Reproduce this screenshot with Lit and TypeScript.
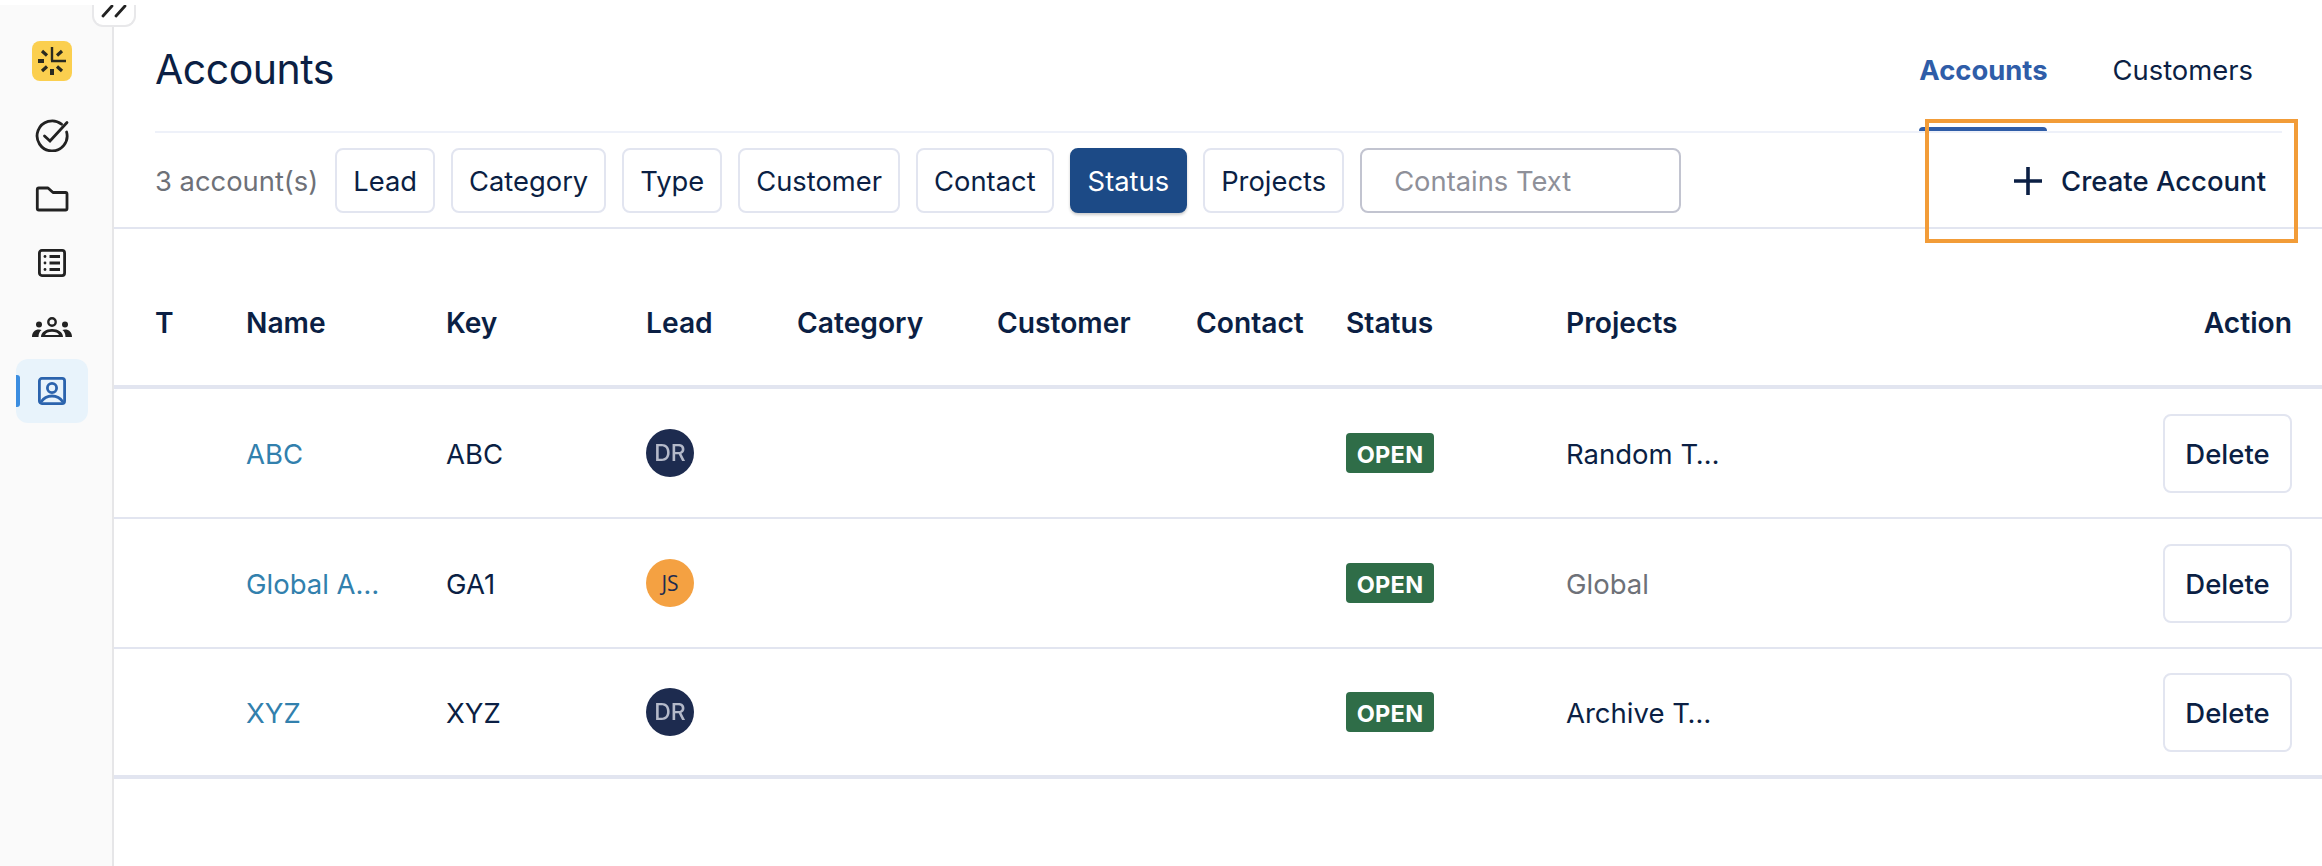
import { LitElement, html, css } from "lit";
import { customElement } from "lit/decorators.js";

const FILTERS = ["Lead", "Category", "Type", "Customer", "Contact", "Status", "Projects"];
const COLS = ["T", "Name", "Key", "Lead", "Category", "Customer", "Contact", "Status", "Projects"];
const ROWS = [
  { name: "ABC", key: "ABC", av: "DR", project: "Random T…", muted: false },
  { name: "Global A…", key: "GA1", av: "JS", project: "Global", muted: true },
  { name: "XYZ", key: "XYZ", av: "DR", project: "Archive T…", muted: false },
];

@customElement("app-root")
export class AppRoot extends LitElement {
  static styles = css`
    :host {
      display: flex;
      position: relative;
      min-height: 866px;
      background: #fff;
      font-family: Inter, "Liberation Sans", sans-serif;
      color: #0b1f44;
      overflow: hidden;
    }
    .side {
      flex: 0 0 114px;
      box-sizing: border-box;
      margin-top: 5px;
      background: #fafafa;
      border-right: 2px solid #e6e6e8;
      display: flex;
      flex-direction: column;
      align-items: center;
      padding: 36px 8px 0 0;
      position: relative;
    }
    .toggle {
      position: absolute;
      left: 92px;
      top: 0;
      width: 44px;
      height: 22px;
      box-sizing: border-box;
      background: #fff;
      border: 2px solid #e8e8ea;
      border-top: 0;
      border-radius: 0 0 11px 11px;
      display: flex;
      justify-content: center;
    }
    .logo { display: block; width: 40px; height: 40px; margin-bottom: 22px; }
    .nav {
      width: 72px;
      height: 64px;
      display: flex;
      align-items: center;
      justify-content: center;
      position: relative;
      border-radius: 12px;
    }
    .nav.active { background: #e8f3fb; }
    .nav.active::before {
      content: "";
      position: absolute;
      left: 0;
      top: 16px;
      width: 4px;
      height: 32px;
      background: #3b8de0;
      border-radius: 0 3px 3px 0;
    }
    .main { flex: 1; min-width: 0; }
    .head {
      height: 133px;
      box-sizing: border-box;
      margin: 0 40px 0 41px;
      padding-right: 29px;
      border-bottom: 2px solid #eef1f9;
      display: flex;
      align-items: stretch;
      justify-content: space-between;
    }
    h1 {
      margin: 0;
      align-self: center;
      font-size: 41px;
      font-weight: 400;
      letter-spacing: -0.5px;
      line-height: 48px;
      padding-top: 6px;
    }
    .tabs { display: flex; gap: 65px; }
    .tab {
      display: flex;
      align-items: center;
      padding-top: 9px;
      font-size: 27.4px;
      position: relative;
    }
    .tab.on { color: #2f5da8; font-weight: 700; }
    .tab.on::after {
      content: "";
      position: absolute;
      left: 0;
      right: 0;
      bottom: 0;
      height: 4px;
      background: #2f5da8;
      border-radius: 4px 4px 0 0;
    }
    .bar {
      height: 96px;
      box-sizing: border-box;
      padding: 15px 56px 0 41px;
      border-bottom: 2px solid #e2e5f0;
      display: flex;
      align-items: flex-start;
      font-size: 27.35px;
    }
    .count { color: #6e7178; height: 65px; line-height: 67px; margin-right: 17px; }
    .chips { display: flex; gap: 16px; }
    .chip {
      height: 65px;
      box-sizing: border-box;
      padding: 1px 16px 0;
      border: 2px solid #e2e5f0;
      border-radius: 8px;
      background: #fff;
      display: flex;
      align-items: center;
    }
    .chip.on {
      background: #1c4a86;
      border-color: #1c4a86;
      color: #fff;
      box-shadow: 0 2px 3px rgba(0, 0, 0, 0.2);
    }
    .search {
      width: 321px;
      height: 65px;
      box-sizing: border-box;
      padding: 1px 0 0 32px;
      border: 2px solid #c2c4d0;
      border-radius: 8px;
      font: inherit;
      color: inherit;
      outline: none;
    }
    .search::placeholder { color: #8e9099; opacity: 1; }
    .create {
      margin-left: auto;
      height: 65px;
      display: flex;
      align-items: center;
      gap: 19px;
      font-weight: 500;
      font-size: 27.5px;
    }
    .create svg { display: block; }
    .grid {
      display: grid;
      grid-template-columns: 91px 200px 200px 151px 200px 199px 150px 220px 1fr 129px;
      align-items: center;
      padding: 0 30px 0 41px;
      font-size: 27.5px;
    }
    .thead {
      margin-top: 35px;
      height: 125px;
      box-sizing: border-box;
      border-bottom: 4px solid #e2e5f0;
      font-weight: 600;
      font-size: 28.2px;
      padding-bottom: 4px;
    }
    .thead .act { grid-column: 10; text-align: right; white-space: nowrap; justify-self: end; }
    .row {
      height: 130px;
      box-sizing: border-box;
      border-bottom: 2px solid #e2e5f0;
    }
    .row.last { border-bottom-width: 4px; }
    .txt { padding-top: 2px; }
    .link { color: #3280ad; }
    .muted { color: #6e7178; }
    .av {
      width: 48px;
      height: 48px;
      border-radius: 50%;
      display: flex;
      align-items: center;
      justify-content: center;
      font-size: 23px;
    }
    .av.DR { background: #1d2b4f; color: #b4b9c9; font-weight: 500; }
    .av.DR span { filter: blur(0.5px); }
    .av.JS {
      background: #f4a142;
      color: #1d2b4f;
      font-family: "Open Sans", sans-serif;
      font-size: 21px;
    }
    .badge {
      width: 88px;
      height: 40px;
      box-sizing: border-box;
      padding-top: 2px;
      border-radius: 4px;
      background: #2f6d48;
      color: #fff;
      font-size: 23.5px;
      font-weight: 700;
      display: flex;
      align-items: center;
      justify-content: center;
      letter-spacing: 0.3px;
    }
    .del {
      grid-column: 10;
      justify-self: end;
      width: 129px;
      height: 79px;
      box-sizing: border-box;
      padding-top: 2px;
      border: 2px solid #e2e5f0;
      border-radius: 8px;
      display: flex;
      align-items: center;
      justify-content: center;
      font-weight: 500;
    }
    .focus {
      position: absolute;
      left: 1925px;
      top: 119px;
      width: 373px;
      height: 124px;
      box-sizing: border-box;
      border: 4px solid #f29c38;
      pointer-events: none;
    }
  `;

  private navIcons = [
    html`<svg width="34" height="34" viewBox="0 0 34 34" fill="none" stroke="#222" stroke-width="2.8" stroke-linecap="round">
      <path d="M26.5 6.2 A15 15 0 1 0 31.6 14" />
      <path d="M9.5 18 L15 23 L32 4.5" />
    </svg>`,
    html`<svg width="34" height="26" viewBox="0 0 34 26" fill="none" stroke="#222" stroke-width="2.8" stroke-linejoin="round">
      <path d="M2.3 3.5 Q2.3 2 3.8 2 H13 L18 6.5 H30.5 Q32 6.5 32 8 V22.5 Q32 24 30.5 24 H3.8 Q2.3 24 2.3 22.5 Z" />
    </svg>`,
    html`<svg width="28" height="28" viewBox="0 0 28 28" fill="none" stroke="#222" stroke-width="2.8">
      <rect x="1.4" y="1.4" width="25.2" height="25.2" rx="2.5" />
      <path d="M11.5 7.5 H22 M11.5 14 H22 M11.5 20.5 H22" />
      <circle cx="7" cy="7.5" r="1.4" fill="#222" stroke="none" />
      <circle cx="7" cy="14" r="1.4" fill="#222" stroke="none" />
      <circle cx="7" cy="20.5" r="1.4" fill="#222" stroke="none" />
    </svg>`,
    html`<svg width="40" height="20" viewBox="0 0 40 20" fill="#222">
      <circle cx="20" cy="5" r="3.7" fill="none" stroke="#222" stroke-width="2.4" />
      <circle cx="7" cy="7.5" r="3" />
      <circle cx="33" cy="7.5" r="3" />
      <path d="M0 20 C0 15 3 12.5 7 12.5 C8 12.5 9 12.7 9.6 13 C7.5 14.6 6.5 17 6.5 20 Z" />
      <path d="M40 20 C40 15 37 12.5 33 12.5 C32 12.5 31 12.7 30.4 13 C32.5 14.6 33.5 17 33.5 20 Z" />
      <path fill-rule="evenodd" d="M9 20 C9 15 14 12 20 12 C26 12 31 15 31 20 Z M13 18 H27 C26 16 23.5 14.8 20 14.8 C16.5 14.8 14 16 13 18 Z" />
    </svg>`,
    html`<svg width="28" height="28" viewBox="0 0 28 28" fill="none" stroke="#2b63ad" stroke-width="2.8">
      <rect x="1.4" y="1.4" width="25.2" height="25.2" rx="2.5" />
      <circle cx="14" cy="11" r="4.6" />
      <path d="M3 25 C6 20.5 10 19 14 19 C18 19 22 20.5 25 25" />
    </svg>`,
  ];

  render() {
    return html`
      <aside class="side">
        <svg class="logo" viewBox="0 0 40 40">
          <rect width="40" height="40" rx="8" fill="#fbcf4f" />
          <g stroke="#2a2a20" fill="none">
            <path d="M20 6 V19.5 M19 20 H34" stroke-width="2.4" />
            <path d="M6 20 H12 M20 28 V34" stroke-width="4" />
            <path d="M10 10 L15 14.5 M30 10 L25 14.5 M10 30 L15 25.5 M30 30 L25 25.5" stroke-width="3.2" />
          </g>
        </svg>
        ${this.navIcons.map(
          (icon, i) => html`<div class="nav ${i === 4 ? "active" : ""}">${icon}</div>`
        )}
        <div class="toggle">
          <svg width="26" height="20" viewBox="0 0 26 20" fill="none" stroke="#222" stroke-width="2.8" stroke-linecap="round">
            <path d="M2 11 L11 1 M15 11 L24 1" />
          </svg>
        </div>
      </aside>
      <main class="main">
        <header class="head">
          <h1>Accounts</h1>
          <nav class="tabs">
            <div class="tab on">Accounts</div>
            <div class="tab">Customers</div>
          </nav>
        </header>
        <section class="bar">
          <span class="count">3 account(s)</span>
          <div class="chips">
            ${FILTERS.map((f) => html`<div class="chip ${f === "Status" ? "on" : ""}">${f}</div>`)}
            <input class="search" placeholder="Contains Text" />
          </div>
          <div class="create">
            <svg width="28" height="28" viewBox="0 0 28 28" stroke="#0b1f44" stroke-width="3.6">
              <path d="M14 0 V28 M0 14 H28" />
            </svg>
            <span>Create Account</span>
          </div>
        </section>
        <div class="grid thead">
          ${COLS.map((c) => html`<div>${c}</div>`)}
          <div class="act">Action</div>
        </div>
        ${ROWS.map(
          (r, i) => html`
            <div class="grid row ${i === 2 ? "last" : ""}">
              <div></div>
              <div class="txt link">${r.name}</div>
              <div class="txt">${r.key}</div>
              <div class="av ${r.av}"><span>${r.av}</span></div>
              <div></div>
              <div></div>
              <div></div>
              <div class="badge">OPEN</div>
              <div class="txt ${r.muted ? "muted" : ""}">${r.project}</div>
              <div class="del">Delete</div>
            </div>
          `
        )}
      </main>
      <div class="focus"></div>
    `;
  }
}
